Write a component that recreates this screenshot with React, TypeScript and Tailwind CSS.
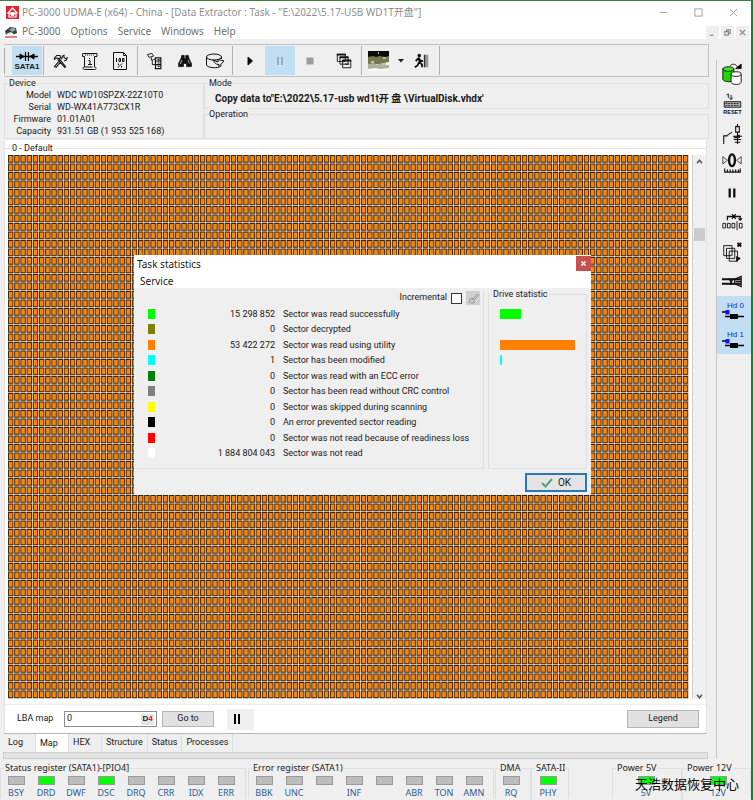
import { Fragment, type ReactNode } from "react";

const UI = "font-['Roboto','Noto_Sans_CJK_SC',sans-serif]";
const TITLE = "font-['Noto_Sans','Noto_Sans_CJK_SC',sans-serif]";

const COLS = 110;
const ROWS = 64;

function cells(inset: number) {
  let d = "";
  const w = 7 - inset * 2;
  const h = 10 - inset * 2;
  for (let r = 0; r < ROWS; r++) {
    for (let c = 0; c < COLS; c++) {
      d += `M${c * 8 + inset} ${r * 11 + inset}h${w}v${h}h-${w}z`;
    }
  }
  return d;
}

const FRAME = cells(0);
const FILL = cells(1.2);

function SectorMap() {
  return (
    <svg className="block h-[544px] min-w-0 flex-1" viewBox="0 0 880 704" preserveAspectRatio="none" role="img" aria-label="Sector map">
      <rect width="879" height="703" fill="#ece6e0" />
      <path d={FRAME} fill="#3a2410" />
      <path d={FILL} fill="#ff8400" />
    </svg>
  );
}

function Icon({ children, size = "size-[20px]" }: { children: ReactNode; size?: string }) {
  return (
    <svg viewBox="0 0 20 20" className={size} fill="none" stroke="#111" strokeWidth="1" aria-hidden="true">
      {children}
    </svg>
  );
}

function ToolButton({ label, active, children }: { label: string; active?: boolean; children: ReactNode }) {
  return (
    <button aria-label={label} className={`flex h-[29px] w-[30px] shrink-0 items-center justify-center ${active ? "bg-[#c2def3]" : ""}`}>
      {children}
    </button>
  );
}

function Sep({ tight }: { tight?: boolean }) {
  return <div className={`h-[29px] w-px shrink-0 bg-[#b4b4b4] ${tight ? "mx-px" : "mx-[2px]"}`} />;
}

function Toolbar() {
  return (
    <div className="mt-[5px] flex h-[33px] items-center overflow-hidden border border-l-0 border-[#c0c0c0]">
      <div className="mr-[7px] h-[26px] w-px bg-[#a8a8a8]" />
      <button className="flex h-[29px] w-[30px] shrink-0 flex-col items-center justify-center bg-[#c2def3] font-['Liberation_Sans',sans-serif] text-[8px] leading-[9px] font-bold">
        <svg viewBox="0 0 24 11" className="h-[11px] w-[24px]" stroke="#000" fill="#000" aria-hidden="true">
          <path d="M1 5.5h22" strokeWidth="1.5" />
          <path d="M5 3l4 2.500-4 2.500zM19 3l-4 2.500 4 2.500z" />
          <path d="M10.500 1v9M13.500 1v9" strokeWidth="1.2" />
        </svg>
        SATA1
      </button>
      <Sep tight />
      <ToolButton label="Utilities">
        <Icon size="size-[16px]">
          <path d="M3 6l3-3h4l1 3-3 1-2-1-3 2zM9 7l8 10-1 1-9-10M11 11l-6 7-2-1 7-8M12 8l1-4 2-1v3l2 1 2-1-1 3-3 1" strokeWidth="1.300" />
        </Icon>
      </ToolButton>
      <ToolButton label="Script">
        <Icon>
          <path d="M3 2.500h14v3h-2.500v10.500M4.500 5.500H2.500v-3M4.500 5.500v10.500M14.500 16c2 0 2 2.500 0 2.500H4.500c-2 0-2-2.500 0-2.500h8" />
          <path d="M5 4h9" strokeDasharray="1 1" />
          <path d="M8.500 9.500h1.500v4M8 13.500h4M9.500 7v1" />
        </Icon>
      </ToolButton>
      <ToolButton label="Statistics report">
        <Icon>
          <path d="M3.500 1.500h10l3 3v14h-13zM13.500 1.500v3h3" />
          <path d="M6.500 7v4M9 7.500h1.500v3H9zM12.500 7.500H14v3h-1.500z" strokeWidth="1" />
          <path d="M8 16.500l4-4M8.500 12.500V14M11.500 15V16.500" />
        </Icon>
      </ToolButton>
      <Sep />
      <ToolButton label="Tree">
        <Icon size="size-[18px]">
          <path d="M1.500 3l5-1.500 2 3-5 1.500zM6 6v3c2 0 2-1 4-1M7 9v5h3" />
          <path d="M10.500 6.500h6v12h-6zM11 10h5M11 14h5M13 8.500h2M13 12h2M13 16h2" strokeWidth="1.300" />
        </Icon>
      </ToolButton>
      <ToolButton label="Find">
        <Icon size="size-[16px]">
          <path d="M6 3h3v4h2V3h3l1 4 3 6v4h-6v-4H8v4H2v-4l3-6z" fill="#111" />
          <path d="M6 9l-2 5M14 9l1.500 4" stroke="#eee" />
        </Icon>
      </ToolButton>
      <ToolButton label="Disk">
        <Icon>
          <ellipse cx="9" cy="6" rx="7.500" ry="3" />
          <path d="M1.500 6v8c1 3 12 4 15 .5M16.500 6v2" />
          <path d="M8 9l5 2V8.500l6 1.500-5 5.500v-2c-3 0-4-1-6-4.500z" fill="#efefef" />
        </Icon>
      </ToolButton>
      <Sep />
      <ToolButton label="Run">
        <Icon><path d="M8 6v8l4.500-4z" fill="#000" /></Icon>
      </ToolButton>
      <ToolButton label="Pause" active>
        <Icon><path d="M8 6v8M12 6v8" stroke="#8faec4" strokeWidth="2" /></Icon>
      </ToolButton>
      <ToolButton label="Stop">
        <Icon><path d="M6.500 6.500h7v7h-7z" fill="#9b9b9b" stroke="none" /></Icon>
      </ToolButton>
      <div className="w-[4px]" />
      <ToolButton label="Windows">
        <Icon size="size-[18px]">
          <path d="M2.500 2.500h9v8h-9zM5.500 5.500h9v8h-9zM8.500 9h9v8.500h-9z" fill="#efefef" />
          <path d="M2 3h10M5 6h10M8 9.500h10" strokeWidth="2" />
          <path d="M11 13.500h5" />
        </Icon>
      </ToolButton>
      <Sep />
      <ToolButton label="Map view">
        <svg viewBox="0 0 22 20" className="h-[20px] w-[22px]" aria-hidden="true">
          <path d="M0 0h21v20H0z" fill="#f8f8f8" />
          <path d="M0 0h21v6H0z" fill="#0a0a0a" />
          <path d="M0 6l5-1 3 1 4-1 5 1 4-1v6l-5 1-4 2-3-1-4 2-5 1z" fill="#77774f" />
          <path d="M0 13l6-1 3 2 5-2 2 2h5v3l-9 1-4-1-8 1z" fill="#aeb09b" />
          <path d="M10 1h1v2h-1zM15 6h3v2h-3zM3 10h3v2H3zM14 12h4v3h-4z" fill="#c0c0a0" />
        </svg>
      </ToolButton>
      <button aria-label="Map view options" className="flex w-[13px] justify-center">
        <svg viewBox="0 0 6 4" className="h-[4px] w-[6px]" aria-hidden="true"><path d="M0 0h6L3 3.500z" fill="#222" /></svg>
      </button>
      <ToolButton label="Exit">
        <Icon size="size-[18px]">
          <path d="M12 3h2v14h-2z" fill="#333" stroke="none" />
          <path d="M14 3h3v14h-3z" fill="#999" stroke="none" />
          <circle cx="7" cy="4" r="1.500" fill="#000" />
          <path d="M7 6.500v5M3 10l3-3 3 3h2M7 11l3 3v3M7 11l-2 4-3 2" strokeWidth="2" />
        </Icon>
      </ToolButton>
      <Sep />
    </div>
  );
}

function Group({ title, className = "", titleClass = "", children }: { title: string; className?: string; titleClass?: string; children?: ReactNode }) {
  return (
    <section className={`relative border border-[#dfdfdf] ${className}`}>
      <h2 className={`absolute top-[-7px] left-[3px] bg-[#efefef] px-px leading-[12px] whitespace-nowrap ${titleClass}`}>{title}</h2>
      {children}
    </section>
  );
}

const DEVICE = [
  ["Model", "WDC WD10SPZX-22Z10T0"],
  ["Serial", "WD-WX41A773CX1R"],
  ["Firmware", "01.01A01"],
  ["Capacity", "931.51 GB (1 953 525 168)"],
];

const STATS = [
  { color: "bg-[#00ff00]", count: "15 298 852", text: "Sector was read successfully", bar: "w-[21px]" },
  { color: "bg-[#808000]", count: "0", text: "Sector decrypted", bar: "" },
  { color: "bg-[#ff8000]", count: "53 422 272", text: "Sector was read using utility", bar: "w-[75px]" },
  { color: "bg-[#00ffff]", count: "1", text: "Sector has been modified", bar: "w-[2px]" },
  { color: "bg-[#008000]", count: "0", text: "Sector was read with an ECC error", bar: "" },
  { color: "bg-[#808080]", count: "0", text: "Sector has been read without CRC control", bar: "" },
  { color: "bg-[#ffff00]", count: "0", text: "Sector was skipped during scanning", bar: "" },
  { color: "bg-black", count: "0", text: "An error prevented sector reading", bar: "" },
  { color: "bg-[#ff0000]", count: "0", text: "Sector was not read because of readiness loss", bar: "" },
  { color: "bg-white", count: "1 884 804 043", text: "Sector was not read", bar: "" },
];

function StatsDialog() {
  return (
    <div role="dialog" aria-label="Task statistics" className="absolute top-[254px] left-[134px] flex w-[457px] flex-col bg-[#efefef] pb-[3px]">
      <div className={`bg-white ${TITLE}`}>
        <div className="flex h-[19px] items-start justify-between pl-[3px] text-[10px] leading-[18px]">
          Task statistics
          <button aria-label="Close" className="mt-px flex h-[15px] w-[15px] items-center justify-center bg-[#c75050]">
            <svg viewBox="0 0 6 6" className="size-[5px]" stroke="#fff" strokeWidth="1.6" aria-hidden="true"><path d="M0.500 0.500l5 5M5.500 0.500l-5 5" /></svg>
          </button>
        </div>
        <div className="flex h-[14px] items-center pl-[6px] text-[10px]"><button>Service</button></div>
      </div>
      <div className="flex gap-[4px] pr-[4px] pl-[3px]">
        <div className="mt-[2px] flex-1 border border-t-0 border-l-0 border-[#dfdfdf] pb-[7px]">
          <div className="flex h-[16px] items-center justify-end gap-[4px] pr-[3px]">
            <label htmlFor="incremental">Incremental</label>
            <input id="incremental" type="checkbox" className="size-[11px] appearance-none border border-[#333] bg-white" />
            <button aria-label="Clear" className="flex size-[14px] items-center justify-center bg-[#cfcfcf]">
              <Icon size="size-[13px]"><path d="M3 17l2-7h5l6-7 2 2-7 7v5H5M7 13l4-4" stroke="#959595" strokeWidth="1.500" /></Icon>
            </button>
          </div>
          <table className="h-[155px] w-full table-fixed">
            <colgroup>
              <col className="w-[24px]" />
              <col className="w-[114px]" />
              <col />
            </colgroup>
            <tbody>
              {STATS.map((s) => (
                <tr key={s.text}>
                  <td className="p-0 pl-[11px]"><div className={`h-[10px] w-[7px] ${s.color}`} /></td>
                  <td className="p-0 text-right leading-[12px]">{s.count}</td>
                  <td className="p-0 pl-[8px] leading-[12px] whitespace-nowrap">{s.text}</td>
                </tr>
              ))}
            </tbody>
          </table>
        </div>
        <Group title="Drive statistic" className="mt-[6px] w-[99px]">
          <div className="mt-[11px] grid h-[155px] grid-rows-10 items-center pl-[11px]">
            {STATS.map((s) => (
              <div key={s.text} className={`h-[10px] ${s.bar ? s.color : ""} ${s.bar}`} />
            ))}
          </div>
        </Group>
      </div>
      <div className="mt-[4px] flex justify-end pr-[4px]">
        <button className="flex h-[19px] w-[62px] items-center justify-center gap-[5px] border-2 border-[#2878b8] bg-[#e4e4e4] text-[10px]">
          <svg viewBox="0 0 12 10" className="h-[10px] w-[12px]" fill="none" stroke="#4ca578" strokeWidth="2" aria-hidden="true"><path d="M1 5l3.500 3.500L11 1" /></svg>
          OK
        </button>
      </div>
    </div>
  );
}

function SideButton({ label, children }: { label: string; children: ReactNode }) {
  return (
    <button aria-label={label} className="flex flex-1 items-center justify-center pr-[5px]">
      <svg viewBox="0 0 24 26" className="h-[24px] w-[22px]" fill="none" stroke="#111" aria-hidden="true">{children}</svg>
    </button>
  );
}

function SideBar() {
  return (
    <aside className="mt-[21px] w-[35px] shrink-0 border-l border-[#c4c4c4]">
      <div className="flex h-[236px] flex-col">
        <SideButton label="Copy drive">
          <path d="M2 6v12c2 3 10 3 12 0V6z" fill="#22d600" />
          <ellipse cx="8" cy="6.500" rx="6" ry="2.500" fill="#3be81c" />
          <path d="M11 12v9c1 3 10 3 11 0v-9z" fill="#fff" />
          <ellipse cx="16.500" cy="12" rx="5.500" ry="2.500" fill="#fff" />
          <path d="M10 3c3-3 6-2 8 1" />
          <path d="M16 6h6V1z" fill="#000" />
        </SideButton>
        <SideButton label="Reset">
          <path d="M6 3l2-1v4M11 3v5M9 6l2 2 2-2" />
          <path d="M3.500 10.500h18v6h-18z" fill="#bbb" />
          <path d="M5 12.500h15M5 14.500h15" strokeDasharray="2 1" />
          <text x="12.500" y="24" textAnchor="middle" fontSize="6" fontWeight="bold" fill="#111" stroke="none" className="font-['Liberation_Sans',sans-serif]">RESET</text>
        </SideButton>
        <SideButton label="Power switch">
          <path d="M3 24v-9h4M6 15l6-4M13 15.500h10M18 2v3M16 5h4v6h-4zM18 11v13M14 19h8M15 22h6" strokeWidth="1.200" />
          <path d="M14 17l6-3v3z" fill="#111" />
        </SideButton>
        <SideButton label="Recalibrate">
          <ellipse cx="12" cy="10" rx="3.200" ry="6.500" strokeWidth="2.500" />
          <path d="M2 6l5 4-5 4zM22 6l-5 4 5 4z" strokeWidth=".8" />
          <path d="M4 19v4h17v-4M7 20v3M10 20v3M13 20v3M16 20v3M19 20v3" strokeWidth="1.300" />
        </SideButton>
        <SideButton label="Pause drive">
          <path d="M9.500 8v10M14.500 8v10" strokeWidth="2.500" />
        </SideButton>
        <SideButton label="Sector relocation">
          <path d="M7 11V7h14v4M12 4.500l4 5M16 4.500l-4 5M19 9l2 2 2-2" strokeWidth="1.400" />
          <path d="M2 14.500h3v5H2zM7 14.500h3v5H7zM12 14.500h3v5h-3zM20 14.500h3v5h-3zM17.500 12v10" />
        </SideButton>
        <SideButton label="Copy pages">
          <path d="M3 6h9v11H3zM6 9h9v11H6zM9 12h9v11H9z" fill="#efefef" />
          <path d="M18 3l4 4M22 3l-4 4" strokeWidth="2" />
          <path d="M17 18l4 2-4 3z" fill="#111" />
        </SideButton>
        <SideButton label="Connector">
          <path d="M1 11h21M1 16h21" strokeWidth="2.200" />
          <path d="M9 10l3 7M13 10l-3 7M16 13.500h6" strokeWidth="1.600" />
          <path d="M15 11l7-3v11l-7-3z" strokeWidth="1.300" />
        </SideButton>
      </div>
      {["Hd 0", "Hd 1"].map((hd) => (
        <button key={hd} className="flex h-[29px] w-full flex-col items-center justify-center bg-[#c2def3] pr-[2px] font-['Liberation_Sans',sans-serif] text-[8px] leading-[8px] text-[#1a22dd]">
          <span className="self-end pr-[5px]">{hd}</span>
          <svg viewBox="0 0 24 10" className="h-[10px] w-[24px]" aria-hidden="true">
            <path d="M1 2h4M4 6.500h19" stroke="#000" strokeWidth="1.500" />
            <path d="M9 4h8v5H9z" />
            <path d="M4.500 0h4v4.500h-4z" fill="#1414e6" />
          </svg>
        </button>
      ))}
    </aside>
  );
}

type Led = [string, boolean?];

function Leds({ title, leds, className }: { title: string; leds: Led[]; className: string }) {
  return (
    <Group title={title} titleClass="text-[#222]" className={`border-b-0 ${className}`}>
      <div className="flex pt-[7px]">
        {leds.map(([name, on], i) => (
          <div key={i} className="flex w-[30px] flex-col items-center text-[9px] leading-[13px] text-[#2f5b90]">
            <span className={`h-[9px] w-[17px] border border-[#999] ${on ? "bg-[#00ff00]" : "bg-[#bdbdbd]"}`} />
            <span className="mt-px h-[13px]">{name}</span>
          </div>
        ))}
      </div>
    </Group>
  );
}

const TABS = ["Log", "Map", "HEX", "Structure", "Status", "Processes"];

function PauseGlyph() {
  return <svg viewBox="0 0 8 10" className="h-[10px] w-[8px]" aria-hidden="true"><path d="M1 0h2v10H1zM5 0h2v10H5z" /></svg>;
}

export default function App() {
  return (
    <div className={`relative min-h-screen overflow-hidden border-t border-r-2 border-t-[#3f7c40] border-r-[#1c8024] bg-[#efefef] text-[9px] text-[#1a1a1a] ${UI}`}>
      <header className={`bg-white text-[10px] text-[#8f8f8f] ${TITLE}`}>
        <div className="flex h-[23px] items-center pl-[6px]">
          <svg viewBox="0 0 13 13" className="mr-[3px] size-[13px]" aria-hidden="true">
            <path d="M0 0h13v13H0z" fill="#dd2432" />
            <path d="M6.500 2L2 7h9zM3 8h7v3H3z" fill="none" stroke="#fff" strokeWidth="1.200" />
            <path d="M5 6h3v4H5z" fill="#fff" />
          </svg>
          <h1 className="flex-1 whitespace-nowrap">PC-3000 UDMA-E (x64) - China - [Data Extractor : Task - "E:\2022\5.17-USB WD1T开盘"]</h1>
          <div className="flex">
            {["M1 5h8", "M1 1h8v8H1z", "M1 1l8 8M9 1l-8 8"].map((d, i) => (
              <button key={d} aria-label={["Minimize", "Maximize", "Close"][i]} className="flex w-[35px] items-center justify-center">
                <svg viewBox="0 0 10 10" className="size-[9px]" fill="none" stroke="#999" aria-hidden="true"><path d={d} /></svg>
              </button>
            ))}
          </div>
        </div>
        <nav className="flex h-[15px] items-center pl-[5px] text-[#707070]">
          <svg viewBox="0 0 12 12" className="mr-[5px] size-[12px]" aria-hidden="true">
            <path d="M0 5l5-4 6 1 1 5-4 2H1z" fill="#33443f" />
            <path d="M4 3l5-1 2 2-4 2z" fill="#9aa" />
            <path d="M1 8l5-2 4 3-7 1z" fill="#eee" />
            <path d="M0 10h12v2H0z" fill="#e48080" />
          </svg>
          <div className="flex flex-1 gap-[10px]">
            {["PC-3000", "Options", "Service", "Windows", "Help"].map((m) => <button key={m}>{m}</button>)}
          </div>
          <div className="flex gap-[2px] self-end pr-[2px]">
            {["M2 8h4", "M2 4h4v4H2zM4 4V2h4v4H6", "M2 2l6 6M8 2l-6 6"].map((d, i) => (
              <button key={d} aria-label={["Minimize child", "Restore child", "Close child"][i]} className="flex h-[13px] w-[13px] items-center justify-center bg-[#efefef]">
                <svg viewBox="0 0 10 10" className="size-[9px]" fill="none" stroke="#888" strokeWidth="1.300" aria-hidden="true"><path d={d} /></svg>
              </button>
            ))}
          </div>
        </nav>
      </header>

      <div className="flex">
        <div className="min-w-0 flex-1 pr-[7px] pl-[4px]">
          <Toolbar />
          <div className="mt-[6px] flex h-[56px]">
            <Group title="Device" className="w-[200px]">
              <dl className="grid grid-cols-[46px_1fr] gap-x-[6px] pt-[5px] leading-[12px]">
                {DEVICE.map(([k, v]) => (
                  <Fragment key={k}>
                    <dt className="text-right">{k}</dt>
                    <dd className="whitespace-nowrap">{v}</dd>
                  </Fragment>
                ))}
              </dl>
            </Group>
            <div className="flex flex-1 flex-col gap-[5px]">
              <Group title="Mode" className="h-[26px]">
                <p className="pt-[8px] pl-[10px] text-[10px] leading-[14px] font-bold whitespace-nowrap">Copy data to"E:\2022\5.17-usb wd1t开 盘 \VirtualDisk.vhdx'</p>
              </Group>
              <Group title="Operation" className="flex-1" />
            </div>
          </div>

          <main className="mt-px mr-[2px] border border-t-0 border-b-[#b8b8b8] border-[#e4e4e4] bg-white pt-[8px]">
            <div className="relative border-t border-[#f0e0e0] pt-[6px] pb-[5px] pl-[3px]">
              <h2 className="absolute top-[-7px] left-[6px] bg-white px-px leading-[12px]">0 - Default</h2>
              <div className="flex">
                <SectorMap />
                <div className="ml-[3px] flex w-[14px] flex-col items-center justify-between border-l border-[#d0d0d0] bg-[#efefef]">
                  <svg viewBox="0 0 8 6" className="mt-[4px] h-[5px] w-[7px]" fill="none" stroke="#555" strokeWidth="1.800" aria-hidden="true"><path d="M1 5l3-3.500L7 5" /></svg>
                  <div className="mb-[390px] h-[13px] w-[11px] bg-[#cbcbcb]" />
                  <svg viewBox="0 0 8 6" className="h-[5px] w-[7px]" fill="none" stroke="#555" strokeWidth="1.800" aria-hidden="true"><path d="M1 1l3 3.500L7 1" /></svg>
                </div>
              </div>
            </div>
            <div className="flex h-[29px] items-center border-t border-[#eee] pr-[7px] pl-[12px]">
              <label htmlFor="lba" className="w-[47px]">LBA map</label>
              <div className="flex h-[16px] w-[93px] items-center border border-[#8c8c8c] bg-white pr-[2px] pl-[2px]">
                <input id="lba" defaultValue="0" className="min-w-0 flex-1 outline-none" />
                <button aria-label="Decimal input" className="flex h-[11px] w-[13px] items-center justify-center bg-[#e4e4e4] font-['Liberation_Sans',sans-serif] text-[8px] font-bold">D<span className="text-[#e01030]">4</span></button>
              </div>
              <button className="ml-[5px] h-[16px] w-[52px] border border-[#b5b5b5] bg-[#e1e1e1]">Go to</button>
              <button aria-label="Pause map" className="ml-[13px] flex h-[21px] w-[27px] items-center bg-[#efefef] pl-[6px]"><PauseGlyph /></button>
              <button className="ml-auto h-[18px] w-[72px] border border-[#b5b5b5] bg-[#e1e1e1]">Legend</button>
            </div>
          </main>

          <div className="flex h-[18px]" role="tablist">
            {TABS.map((t) => (
              <button
                key={t}
                role="tab"
                aria-selected={t === "Map"}
                className={`border-r border-[#dedede] px-[4px] text-left ${t === "Map" ? "w-[33px] bg-white pt-[2px]" : t === "Log" ? "w-[32px]" : t === "HEX" ? "w-[33px]" : ""}`}
              >
                {t}
              </button>
            ))}
          </div>
          <div className="-ml-px mr-px h-[7px] border border-[#cdcdcd] bg-[#e4e4e4]" />
        </div>
        <SideBar />
      </div>

      <footer className={`flex h-[40px] pt-[9px] text-[9px] ${TITLE}`}>
        <Leds className="w-[246px]" title="Status register (SATA1)-[PIO4]" leds={[["BSY"], ["DRD", true], ["DWF"], ["DSC", true], ["DRQ"], ["CRR"], ["IDX"], ["ERR"]]} />
        <Leds className="ml-[2px] w-[246px]" title="Error register (SATA1)" leds={[["BBK"], ["UNC"], [""], ["INF"], [""], ["ABR"], ["TON"], ["AMN"]]} />
        <Leds className="ml-px w-[36px]" title="DMA" leds={[["RQ"]]} />
        <Leds className="w-[38px] pl-px" title="SATA-II" leds={[["PHY", true]]} />
        <div className="flex-1" />
        <Leds className="w-[70px] pl-[18px]" title="Power 5V" leds={[["5V", true]]} />
        <Leds className="w-[69px] pl-[20px]" title="Power 12V" leds={[["12V", true]]} />
      </footer>

      <StatsDialog />
      <p className="absolute right-[12px] bottom-[4px] font-['Noto_Sans_CJK_SC',sans-serif] text-[13px] leading-[24px] text-black">天浩数据恢复中心</p>
    </div>
  );
}
